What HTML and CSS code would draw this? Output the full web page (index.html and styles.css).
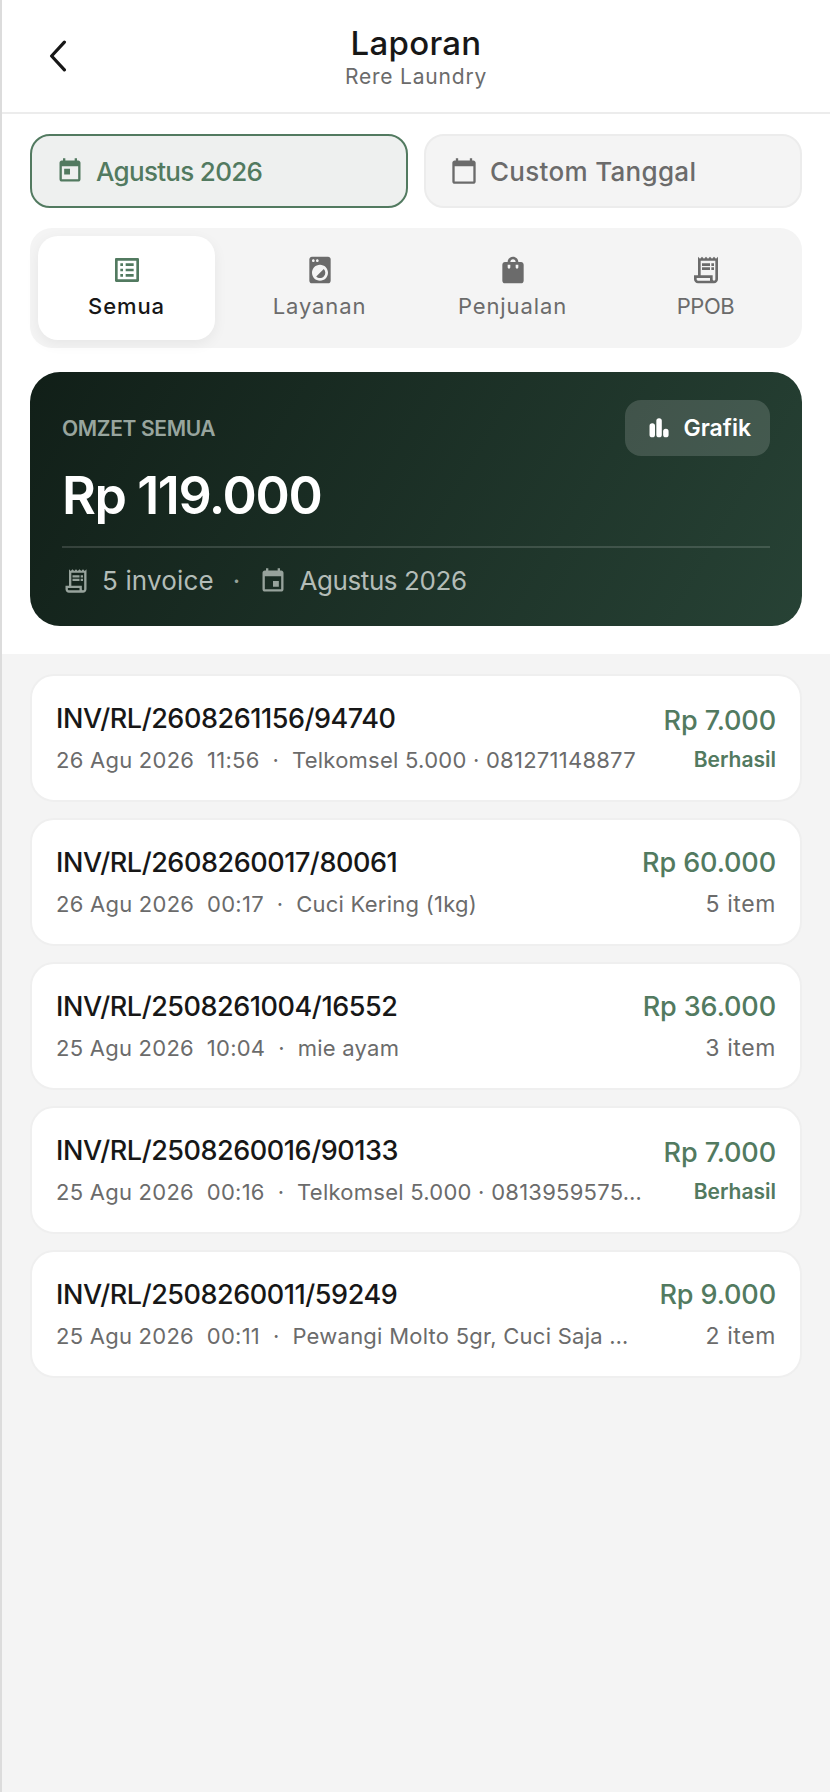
FILE: index.html
```html
<!DOCTYPE html>
<html lang="en">
<head>
    <meta charset="UTF-8">
    <title>Laporan</title>
    <link rel="stylesheet" href="styles.css">
</head>
<body>
    <div class="page">
        <!-- Header -->
        <header class="header">
            <svg class="back" viewBox="0 0 18 30"><polyline points="15,2 3,15 15,28"/></svg>
            <div class="header-text">
                <h1>Laporan</h1>
                <p>Rere Laundry</p>
            </div>
        </header>

        <div class="top">
            <!-- Period filter -->
            <div class="filters">
                <div class="filter active">
                    <svg class="icon" viewBox="0 0 24 24"><path d="M19 3h-1V1h-2v2H8V1H6v2H5c-1.11 0-1.99.9-1.99 2L3 19c0 1.1.89 2 2 2h14c1.1 0 2-.9 2-2V5c0-1.1-.9-2-2-2zm0 16H5V8h14v11zM7 10h5v5H7z"/></svg>
                    <span>Agustus 2026</span>
                </div>
                <div class="filter">
                    <svg class="icon" viewBox="0 0 24 24"><path d="M20 3h-1V1h-2v2H7V1H5v2H4c-1.1 0-2 .9-2 2v16c0 1.1.9 2 2 2h16c1.1 0 2-.9 2-2V5c0-1.1-.9-2-2-2zm0 18H4V8h16v13z"/></svg>
                    <span>Custom Tanggal</span>
                </div>
            </div>

            <!-- Tabs -->
            <div class="tabs">
                <div class="tab active">
                    <svg class="icon" viewBox="0 0 24 24"><path d="M19 5v14H5V5h14m1.1-2H3.9c-.5 0-.9.4-.9.9v16.2c0 .4.4.9.9.9h16.2c.4 0 .9-.5.9-.9V3.9c0-.5-.5-.9-.9-.9zM11 7h6v2h-6V7zm0 4h6v2h-6v-2zm0 4h6v2h-6zM7 7h2v2H7zm0 4h2v2H7zm0 4h2v2H7z"/></svg>
                    <span>Semua</span>
                </div>
                <div class="tab">
                    <svg class="icon" viewBox="0 0 24 24"><path d="M9.17 16.83c1.56 1.56 4.1 1.56 5.66 0 1.56-1.56 1.56-4.1 0-5.66l-5.66 5.66zM18 2.01L6 2c-1.11 0-2 .89-2 2v16c0 1.11.89 2 2 2h12c1.11 0 2-.89 2-2V4c0-1.11-.89-1.99-2-1.99zM10 4c.55 0 1 .45 1 1s-.45 1-1 1-1-.45-1-1 .45-1 1-1zM7 4c.55 0 1 .45 1 1s-.45 1-1 1-1-.45-1-1 .45-1 1-1zm5 16c-3.31 0-6-2.69-6-6s2.69-6 6-6 6 2.69 6 6-2.69 6-6 6z"/></svg>
                    <span>Layanan</span>
                </div>
                <div class="tab">
                    <svg class="icon" viewBox="0 0 24 24"><path d="M18 6h-2c0-2.21-1.79-4-4-4S8 3.79 8 6H6c-1.1 0-2 .9-2 2v12c0 1.1.9 2 2 2h12c1.1 0 2-.9 2-2V8c0-1.1-.9-2-2-2zm-8 4c0 .55-.45 1-1 1s-1-.45-1-1V8h2v2zm2-6c1.1 0 2 .9 2 2h-4c0-1.1.9-2 2-2zm4 6c0 .55-.45 1-1 1s-1-.45-1-1V8h2v2z"/></svg>
                    <span>Penjualan</span>
                </div>
                <div class="tab">
                    <svg class="icon" viewBox="0 0 24 24"><path d="M19.5 3.5 18 2l-1.5 1.5L15 2l-1.5 1.5L12 2l-1.5 1.5L9 2 7.5 3.5 6 2v14H3v3c0 1.66 1.34 3 3 3h12c1.66 0 3-1.34 3-3V2l-1.5 1.5zM15 20H6c-.55 0-1-.45-1-1v-1h10v2zm4-1c0 .55-.45 1-1 1s-1-.45-1-1v-3H8V5h11v14zM9 7h6v2H9zM16 7h2v2h-2zM9 10h6v2H9zM16 10h2v2h-2z"/></svg>
                    <span class="tab-short">PPOB</span>
                </div>
            </div>

            <!-- Summary card -->
            <div class="hero">
                <div class="hero-top">
                    <div class="hero-label">OMZET SEMUA</div>
                    <div class="chart-btn">
                        <svg class="icon" viewBox="0 0 24 24">
                            <rect x="4.9" y="8.5" width="4.1" height="10.5" rx="2"/>
                            <rect x="10" y="4.7" width="4.1" height="14.3" rx="2"/>
                            <rect x="15.1" y="12.6" width="4.1" height="6.4" rx="2"/>
                        </svg>
                        <span>Grafik</span>
                    </div>
                </div>
                <div class="hero-total">Rp 119.000</div>
                <div class="hero-meta">
                    <svg class="icon" viewBox="0 0 24 24"><path d="M19.5 3.5 18 2l-1.5 1.5L15 2l-1.5 1.5L12 2l-1.5 1.5L9 2 7.5 3.5 6 2v14H3v3c0 1.66 1.34 3 3 3h12c1.66 0 3-1.34 3-3V2l-1.5 1.5zM15 20H6c-.55 0-1-.45-1-1v-1h10v2zm4-1c0 .55-.45 1-1 1s-1-.45-1-1v-3H8V5h11v14zM9 7h6v2H9zM16 7h2v2h-2zM9 10h6v2H9zM16 10h2v2h-2z"/></svg>
                    <span>5 invoice</span>
                    <span class="dot">·</span>
                    <svg class="icon" viewBox="0 0 24 24"><path d="M17 12h-5v5h5v-5zM16 1v2H8V1H6v2H5c-1.11 0-1.99.9-1.99 2L3 19c0 1.1.89 2 2 2h14c1.1 0 2-.9 2-2V5c0-1.1-.9-2-2-2h-1V1h-2zm3 18H5V8h14v11z"/></svg>
                    <span class="hero-date">Agustus 2026</span>
                </div>
            </div>
        </div>

        <!-- Invoice list -->
        <div class="list">
            <div class="card">
                <div class="card-left">
                    <div class="invoice">INV/RL/2608261156/94740</div>
                    <div class="meta">26 Agu 2026  11:56  ·  Telkomsel 5.000 · 081271148877</div>
                </div>
                <div class="card-right">
                    <div class="amount">Rp 7.000</div>
                    <div class="status">Berhasil</div>
                </div>
            </div>
            <div class="card">
                <div class="card-left">
                    <div class="invoice">INV/RL/2608260017/80061</div>
                    <div class="meta">26 Agu 2026  00:17  ·  Cuci Kering (1kg)</div>
                </div>
                <div class="card-right">
                    <div class="amount">Rp 60.000</div>
                    <div class="count">5 item</div>
                </div>
            </div>
            <div class="card">
                <div class="card-left">
                    <div class="invoice">INV/RL/2508261004/16552</div>
                    <div class="meta">25 Agu 2026  10:04  ·  mie ayam</div>
                </div>
                <div class="card-right">
                    <div class="amount">Rp 36.000</div>
                    <div class="count">3 item</div>
                </div>
            </div>
            <div class="card">
                <div class="card-left">
                    <div class="invoice">INV/RL/2508260016/90133</div>
                    <div class="meta">25 Agu 2026  00:16  ·  Telkomsel 5.000 · 0813959575…</div>
                </div>
                <div class="card-right">
                    <div class="amount">Rp 7.000</div>
                    <div class="status">Berhasil</div>
                </div>
            </div>
            <div class="card">
                <div class="card-left">
                    <div class="invoice">INV/RL/2508260011/59249</div>
                    <div class="meta">25 Agu 2026  00:11  ·  Pewangi Molto 5gr, Cuci Saja …</div>
                </div>
                <div class="card-right">
                    <div class="amount">Rp 9.000</div>
                    <div class="count">2 item</div>
                </div>
            </div>
        </div>
    </div>
</body>
</html>
```

FILE: styles.css
```css
* {
    box-sizing: border-box;
    margin: 0;
    padding: 0;
}

html, body {
    height: 100%;
    overflow: hidden;
    background: #fff;
    font-family: Inter, "Noto Sans", sans-serif;
}

.page {
    height: 1792px;
    display: flex;
    flex-direction: column;
    border-left: 2px solid #dcdcdc;
    background: #f4f4f4;
}

.icon {
    display: block;
    flex-shrink: 0;
    fill: currentColor;
}

/* Header */
.header {
    height: 114px;
    position: relative;
    display: flex;
    justify-content: center;
    align-items: center;
    background: #fff;
    border-bottom: 2px solid #ececec;
}

.back {
    position: absolute;
    left: 46px;
    top: 40px;
    width: 20px;
    height: 32px;
    fill: none;
    stroke: #171717;
    stroke-width: 3;
    stroke-linecap: round;
    stroke-linejoin: round;
}

.header-text {
    text-align: center;
    padding-top: 2px;
}

.header-text h1 {
    font-size: 33px;
    line-height: 38px;
    font-weight: 500;
    letter-spacing: 0.3px;
    color: #171717;
}

.header-text p {
    margin-top: 2px;
    font-size: 21px;
    line-height: 26px;
    color: #6b6b6b;
    letter-spacing: 0.8px;
}

.top {
    background: #fff;
    padding: 20px 28px 28px 28px;
    display: flex;
    flex-direction: column;
}

/* Period filter */
.filters {
    display: flex;
    gap: 16px;
    margin-bottom: 20px;
}

.filter {
    flex: 1;
    height: 74px;
    display: flex;
    align-items: center;
    gap: 12px;
    padding-left: 24px;
    background: #f4f4f4;
    border: 2px solid #ececec;
    border-radius: 20px;
    color: #6b6b6b;
    font-size: 26px;
    font-weight: 500;
    letter-spacing: 0.3px;
}

.filter .icon {
    width: 28px;
    height: 28px;
}

.filter.active {
    background: #eef0ef;
    border-color: #527a60;
    color: #527a60;
    letter-spacing: -0.7px;
}

/* Tabs */
.tabs {
    height: 120px;
    display: flex;
    gap: 16px;
    padding: 8px;
    margin-bottom: 24px;
    background: #f4f4f4;
    border-radius: 22px;
}

.tab {
    flex: 1 1 0;
    display: flex;
    flex-direction: column;
    align-items: center;
    justify-content: center;
    gap: 7px;
    padding-bottom: 4px;
    border-radius: 20px;
    color: #6b6b6b;
    font-size: 22px;
    letter-spacing: 0.9px;
}

.tab .icon {
    width: 32px;
    height: 32px;
}

.tab-short {
    letter-spacing: -0.4px;
}

.tab.active {
    background: #fff;
    color: #171717;
    font-weight: 500;
    box-shadow: 0 4px 14px rgba(0, 0, 0, 0.06);
}

.tab.active .icon {
    color: #527a60;
}

/* Summary card */
.hero {
    height: 254px;
    padding: 28px 32px 0 32px;
    border-radius: 30px;
    background: linear-gradient(120deg, #111f18, #274235);
    color: #fff;
}

.hero-top {
    height: 56px;
    display: flex;
    justify-content: space-between;
    align-items: center;
}

.hero-label {
    font-size: 21px;
    font-weight: 600;
    letter-spacing: -0.35px;
    color: #98a59e;
}

.chart-btn {
    height: 56px;
    display: flex;
    align-items: center;
    gap: 8px;
    padding: 0 19px 0 18px;
    background: rgba(255, 255, 255, 0.15);
    border-radius: 16px;
    font-size: 23px;
    font-weight: 600;
}

.chart-btn .icon {
    width: 32px;
    height: 32px;
}

.hero-total {
    height: 92px;
    display: flex;
    align-items: center;
    padding-bottom: 12px;
    border-bottom: 2px solid rgba(255, 255, 255, 0.14);
    font-size: 52px;
    font-weight: 600;
    letter-spacing: -1.4px;
}

.hero-meta {
    height: 65px;
    display: flex;
    align-items: center;
    gap: 12px;
    color: #b3bcb7;
    font-size: 26px;
    letter-spacing: 0.15px;
}

.hero-meta .icon {
    width: 28px;
    height: 28px;
    color: #97a39c;
}

.hero-meta .dot {
    margin: 0 7px;
    color: #97a39c;
}

.hero-date {
    letter-spacing: -0.4px;
}

/* Invoice list */
.list {
    padding: 20px 28px;
    display: flex;
    flex-direction: column;
    gap: 16px;
}

.card {
    height: 128px;
    display: flex;
    align-items: center;
    justify-content: space-between;
    padding: 0 24px 2px 24px;
    background: #fff;
    border: 2px solid #efefef;
    border-radius: 24px;
}

.card-left {
    flex: 1 1 0;
    min-width: 0;
}

.invoice {
    font-size: 27px;
    line-height: 38px;
    font-weight: 500;
    letter-spacing: -0.45px;
    color: #171717;
}

.meta {
    margin-top: 7px;
    font-size: 22px;
    line-height: 30px;
    letter-spacing: 0.25px;
    color: #6b6b6b;
    white-space: pre;
}

.card-right {
    flex-shrink: 0;
    text-align: right;
}

.amount {
    font-size: 27px;
    line-height: 38px;
    font-weight: 500;
    letter-spacing: -0.1px;
    color: #527a60;
}

.status {
    margin-top: 7px;
    font-size: 21px;
    line-height: 26px;
    font-weight: 600;
    color: #527a60;
}

.count {
    margin-top: 7px;
    font-size: 23px;
    line-height: 30px;
    color: #6b6b6b;
    letter-spacing: 0.6px;
}
```
